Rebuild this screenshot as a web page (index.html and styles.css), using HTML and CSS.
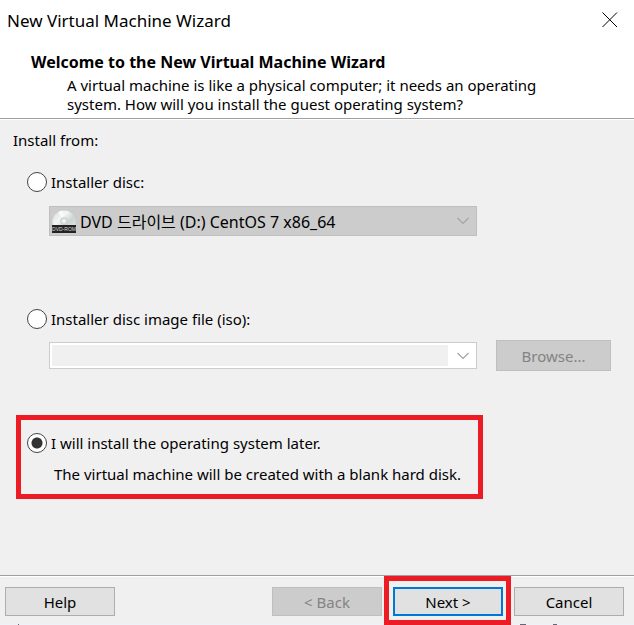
FILE: index.html
```html
<!DOCTYPE html>
<html lang="en">
<head>
<meta charset="utf-8">
<meta name="viewport" content="width=device-width, initial-scale=1">
<title>New Virtual Machine Wizard</title>
<link rel="stylesheet" href="styles.css">
</head>
<body>
<form class="wizard">
  <header class="header">
    <div class="titlebar">
      <span class="title">New Virtual Machine Wizard</span>
      <button type="button" class="close" aria-label="Close">
        <svg width="16" height="16" viewBox="0 0 16 16"><path d="M.5.5l14.500 14.500M15 .5L.5 15" stroke="#000" stroke-width="1" fill="none"/></svg>
      </button>
    </div>
    <div class="intro">
      <h1>Welcome to the New Virtual Machine Wizard</h1>
      <p>A virtual machine is like a physical computer; it needs an operating system. How will you install the guest operating system?</p>
    </div>
  </header>

  <main class="content">
    <p class="legend">Install from:</p>

    <section class="source">
      <label class="option"><input type="radio" name="source">Installer disc:</label>
      <div class="field field-disc">
        <div class="combo combo-disc">
          <svg class="disc" width="24" height="24" viewBox="0 0 24 24" aria-hidden="true">
            <defs>
              <linearGradient id="shine" x1="0" y1="0" x2="1" y2="1">
                <stop offset="0" stop-color="#d3dcda"/>
                <stop offset=".35" stop-color="#f3f6f5"/>
                <stop offset=".6" stop-color="#cbd5d2"/>
                <stop offset="1" stop-color="#eef1f0"/>
              </linearGradient>
            </defs>
            <circle cx="12" cy="12" r="11.500" fill="url(#shine)"/>
            <path d="M12 11L6 2a11 11 0 0 1 5-1.500z" fill="#fff" opacity=".7"/>
            <circle cx="12" cy="11" r="3.500" fill="#dfe4e3" stroke="#bcc5c3" stroke-width=".7"/>
            <circle cx="12" cy="11" r="1.200" fill="#f8fafa"/>
            <rect y="15" width="24" height="8" fill="#222"/>
            <text x="12" y="21" text-anchor="middle" class="disc-text">DVD-ROM</text>
          </svg>
          <select aria-label="Disc drive" disabled>
            <option>DVD 드라이브 (D:) CentOS 7 x86_64</option>
          </select>
          <svg class="chevron" width="12" height="8" viewBox="0 0 12 8"><path d="M.5 1L6 6.500 11.500 1" fill="none" stroke="#a3a3a3" stroke-width="1.200"/></svg>
        </div>
      </div>
    </section>

    <section class="source">
      <label class="option"><input type="radio" name="source">Installer disc image file (iso):</label>
      <div class="field">
        <div class="combo combo-file">
          <input type="text" aria-label="Disc image path" disabled>
          <svg class="chevron" width="12" height="8" viewBox="0 0 12 8"><path d="M.5 1L6 6.500 11.500 1" fill="none" stroke="#a3a3a3" stroke-width="1.200"/></svg>
        </div>
        <button type="button" class="btn browse" disabled>Browse...</button>
      </div>
    </section>

    <section class="later">
      <label class="option"><input type="radio" name="source" checked>I will install the operating system later.</label>
      <p>The virtual machine will be created with a blank hard disk.</p>
    </section>
  </main>

  <footer class="footer">
    <button type="button" class="btn">Help</button>
    <div class="nav">
      <button type="button" class="btn" disabled>&lt; Back</button>
      <span class="marked"><button type="button" class="btn primary">Next &gt;</button></span>
      <button type="button" class="btn">Cancel</button>
    </div>
  </footer>
  <div class="edge"></div>
</form>
</body>
</html>
```
FILE: styles.css
```css
* { box-sizing: border-box; }

body {
  margin: 0;
  background: #f0f0f0;
  color: #000;
  font: 15px/20px "Noto Sans", "Noto Sans CJK KR", sans-serif;
}

button, input, select { font: inherit; color: inherit; margin: 0; }
h1, p { margin: 0; }

.wizard {
  display: flex;
  flex-direction: column;
  min-height: 100vh;
}

.header {
  background: #fff;
  border-bottom: 1px solid #a0a0a0;
  box-shadow: 0 1px #fff;
  padding-bottom: 4px;
}

.titlebar {
  display: flex;
  justify-content: space-between;
  align-items: flex-start;
  height: 40px;
  padding: 0 16px 0 7px;
}

.title { font-size: 17px; line-height: 42px; }

.close {
  display: flex;
  margin-top: 12px;
  padding: 0;
  border: 0;
  background: none;
}

.intro { padding: 12px 64px 0 31px; }
.intro h1 { font-size: 16px; line-height: 20px; }
.intro p { padding: 4px 0 0 36px; line-height: 19px; }

.content {
  flex: 1;
  display: flex;
  flex-direction: column;
  padding: 11px 22px 0 16px;
}

.legend { margin-left: -3px; }

.source { margin-top: 20px; padding-left: 11px; }
.source + .source { margin-top: 71px; }

.option {
  display: flex;
  align-items: center;
  gap: 4px;
  height: 24px;
}

.option input {
  appearance: none;
  width: 20px;
  height: 20px;
  border: 1px solid #444;
  border-radius: 50%;
  background: #fff;
}

.option input:checked {
  background: radial-gradient(circle, #333 5px, #fff 6px);
}

.field {
  display: flex;
  align-items: center;
  gap: 19px;
  padding: 9px 0 0 22px;
}

.field-disc { padding-top: 12px; }

.combo {
  position: relative;
  flex: 0 1 428px;
  border: 1px solid #bfbfbf;
}

.combo-disc { height: 30px; background: #ccc; }

.combo-file {
  height: 27px;
  background: #fff;
  border-color: #ccc;
  padding: 2px 28px 2px 2px;
}

.combo select {
  appearance: none;
  width: 100%;
  height: 100%;
  padding: 2px 28px 0 30px;
  border: 0;
  background: none;
  color: #000;
  font-size: 16px;
  opacity: 1;
}

.combo input {
  display: block;
  width: 100%;
  height: 100%;
  border: 0;
  background: #f0f0f0;
}

.disc { position: absolute; left: 2px; top: 3px; }

.disc-text {
  font: 5px "Liberation Sans", sans-serif;
  fill: #ddd;
}

.chevron { position: absolute; right: 7px; top: 50%; margin-top: -4px; }

.btn {
  width: 110px;
  height: 29px;
  padding: 0;
  border: 1px solid #adadad;
  background: #e1e1e1;
}

.btn:disabled {
  border-color: #bfbfbf;
  background: #ccc;
  color: #838383;
}

.browse { width: 115px; height: 31px; }

.primary { border: 2px solid #0078d7; }

.later {
  align-self: flex-start;
  margin-top: 44px;
  padding: 11px 17px 9px 6px;
  border: 5px solid #ed1c24;
}

.later p { padding: 9px 0 0 27px; line-height: 21px; }

.footer {
  display: flex;
  justify-content: space-between;
  padding: 11px 10px 8px 5px;
  border-top: 1px solid #a0a0a0;
  box-shadow: inset 0 1px #fff;
}

.nav { display: flex; gap: 11px; }

.marked { position: relative; display: flex; }

.marked::after {
  content: "";
  position: absolute;
  inset: -11px -8px -9px -9px;
  border: 5px solid #ed1c24;
  pointer-events: none;
}

.edge {
  height: 1px;
  background:
    linear-gradient(#667, #667) 18px 0 / 1px 1px no-repeat,
    linear-gradient(#667, #667) right 108px top 0 / 6px 1px no-repeat,
    linear-gradient(#667, #667) right 77px top 0 / 4px 1px no-repeat,
    #edf3f8;
}
```
